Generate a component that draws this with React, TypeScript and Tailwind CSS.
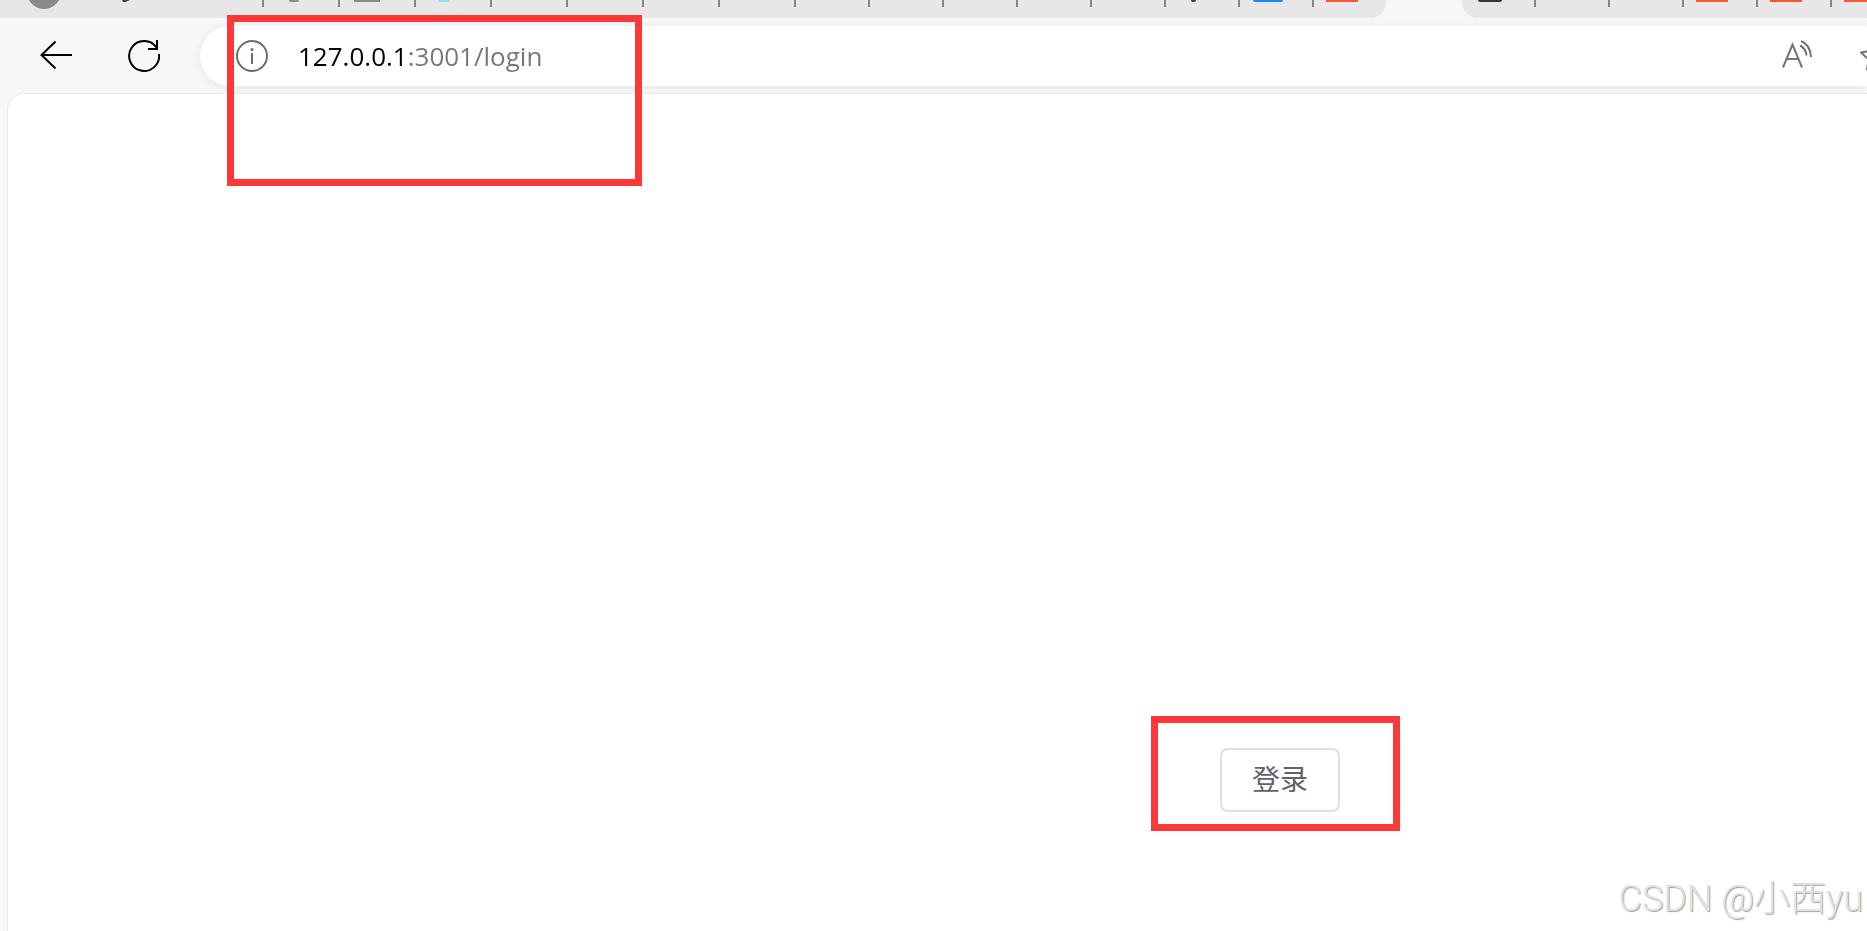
import React from "react";

// Only the bottom edge of every tab icon is visible
const leftTabs = [
  { width: "w-[76px]", icon: "ml-[25px] w-[10px] h-[2px] rounded-b-full bg-[#8a8a8a]" },
  { width: "w-[76px]", icon: "ml-[14px] w-[26px] h-[2px] bg-[#8a8a8a]" },
  { width: "w-[76px]", icon: "ml-[22px] w-[12px] h-[2px] rounded-b-full bg-[#92dcf5]" },
  { width: "w-[76px]", icon: "" },
  { width: "w-[76px]", icon: "" },
  { width: "w-[76px]", icon: "" },
  { width: "w-[76px]", icon: "" },
  { width: "w-[74px]", icon: "" },
  { width: "w-[74px]", icon: "" },
  { width: "w-[74px]", icon: "" },
  { width: "w-[74px]", icon: "" },
  { width: "w-[74px]", icon: "" },
  { width: "w-[74px]", icon: "ml-[25px] w-[5px] h-[2px] rounded-b-full bg-[#3c3c3c]" },
  { width: "w-[74px]", icon: "ml-[13px] w-[30px] h-[2px] rounded-b-full bg-[#1b88f5]" },
];

const rightTabs = [
  { width: "w-[74px]", icon: "ml-4 w-6 h-[2px] rounded-b-full bg-[#363636]" },
  { width: "w-[74px]", icon: "" },
  { width: "w-[74px]", icon: "" },
  { width: "w-[74px]", icon: "ml-3 w-8 h-[2px] bg-[#fc5531]" },
  { width: "w-[74px]", icon: "ml-3 w-8 h-[2px] bg-[#fc5531]" },
];

const Tab = ({ width, icon }: { width: string; icon: string }) => (
  <div className={`${width} h-[7px] shrink-0 border-r-2 border-[#858585]`}>
    <div className={icon}></div>
  </div>
);

const TabStrip = () => (
  <div className="flex h-[18px] overflow-hidden bg-[#f7f7f7]">
    <div className="flex shrink-0 rounded-br-2xl bg-[#e7e7e7]">
      <div className="flex h-[7px] w-[264px] border-r-2 border-[#858585]">
        {/* Profile picture */}
        <svg className="ml-7 h-[9px] w-8 shrink-0" viewBox="0 0 32 9">
          <circle cx="16" cy="-8" r="17" fill="#8e8985" />
        </svg>
        <svg className="ml-[61px] h-[3px] w-[10px]" viewBox="0 0 10 3">
          <path d="M1 0h8L4 2H2z" fill="#3c3c3c" />
        </svg>
      </div>
      {leftTabs.map((tab, idx) => (
        <Tab key={idx} width={tab.width} icon={tab.icon} />
      ))}
      <div className="w-[72px]">
        <div className="ml-3 h-[2px] w-8 bg-[#fc5531]"></div>
      </div>
    </div>
    {/* Active tab */}
    <div className="w-[76px] shrink-0"></div>
    <div className="flex flex-1 overflow-hidden rounded-bl-2xl bg-[#e7e7e7]">
      {rightTabs.map((tab, idx) => (
        <Tab key={idx} width={tab.width} icon={tab.icon} />
      ))}
      <div className="flex-1">
        <div className="ml-3 h-[2px] bg-[#fc5531]"></div>
      </div>
    </div>
  </div>
);

const Toolbar = () => (
  <div className="flex h-[76px] items-start bg-[#f7f7f7] pt-2 pl-10">
    <button aria-label="Back" className="mt-[14px] h-8 w-8 shrink-0">
      <svg className="h-8 w-8" viewBox="0 0 32 32" fill="none" stroke="#000" strokeWidth="2">
        <path d="M15.5 1.5 1.5 15l14 13.5M1.5 15H32" />
      </svg>
    </button>
    <button aria-label="Refresh" className="mt-[14px] ml-14 h-8 w-8 shrink-0">
      <svg className="h-8 w-8" viewBox="0 0 32 32" fill="none" stroke="#000" strokeWidth="2">
        <path d="M31 14a15 15 0 1 1-2.5-6.5M29 0v9h-9" />
      </svg>
    </button>
    <div className="ml-10 flex h-[60px] flex-1 items-center rounded-l-full bg-white pl-9 shadow-[0_1px_8px_rgba(0,0,0,0.08)]">
      <button aria-label="Site information" className="h-8 w-8 shrink-0">
        <svg className="h-8 w-8" viewBox="0 0 32 32" fill="none" stroke="#6b6b6b" strokeWidth="2">
          <circle cx="16" cy="16" r="15" />
          <path d="M16 13v11" />
          <circle cx="16" cy="9.5" r="1.5" fill="#6b6b6b" stroke="none" />
        </svg>
      </button>
      {/* Host is black, port and path are grey */}
      <input
        aria-label="Address"
        type="text"
        defaultValue="127.0.0.1:3001/login"
        className="ml-[30px] h-10 min-w-0 flex-1 bg-[linear-gradient(to_right,#000_107px,#767676_107px)] bg-clip-text font-['Open_Sans',sans-serif] text-[26px] text-transparent caret-black outline-none"
      />
      <button aria-label="Read aloud" className="h-8 w-8 shrink-0">
        <svg className="h-8 w-8" viewBox="0 0 32 32" fill="none" stroke="#737373" strokeWidth="2">
          <path d="M1 27.5 10.5 4.5 20 27.5M4.5 19h12" />
          <path d="M18 5.5c4 2 6 5 6.5 10M19 1c6.5 2.5 9.5 8 10 16" />
        </svg>
      </button>
      <button aria-label="Favorite" className="ml-[46px] h-8 w-[7px] shrink-0 overflow-hidden">
        <svg className="h-8 w-8" viewBox="0 0 32 32" fill="none" stroke="#737373" strokeWidth="2" strokeLinejoin="round">
          <path d="m16 2 4.5 9 10 1.5-7.5 7 2 10-9-5-9 5 1.5-10-7.500-7 10-1.500z" />
        </svg>
      </button>
    </div>
  </div>
);

export default function App() {
  return (
    <div className="relative flex min-h-screen flex-col overflow-hidden bg-[#f7f7f7]">
      <TabStrip />
      <Toolbar />
      <main className="ml-2 flex flex-1 items-start justify-end rounded-tl-2xl bg-white pt-[654px] pr-[527px] shadow-[0_0_1px_1px_#e9e9e9]">
        <div className="relative">
          <button className="h-16 w-[120px] rounded-lg border-2 border-[#dcdfe6] bg-white pb-1 font-['Noto_Sans_CJK_SC',sans-serif] text-[28px] leading-none text-[#606266]">
            登录
          </button>
          <div className="pointer-events-none absolute -top-8 -right-[60px] -bottom-[19px] -left-[69px] border-7 border-[#fc3838]"></div>
        </div>
      </main>
      {/* Highlight round the address */}
      <div className="pointer-events-none absolute top-[15px] left-[227px] h-[171px] w-[415px] border-7 border-[#fc3838]"></div>
      <div className="absolute right-1 bottom-2 font-[Roboto,'Noto_Sans_CJK_SC',sans-serif] text-[36px] leading-12 font-light whitespace-nowrap text-[#e2e2e2] [text-shadow:1px_1px_1px_#a0a0a0]">
        CSDN @小西yu
      </div>
    </div>
  );
}
